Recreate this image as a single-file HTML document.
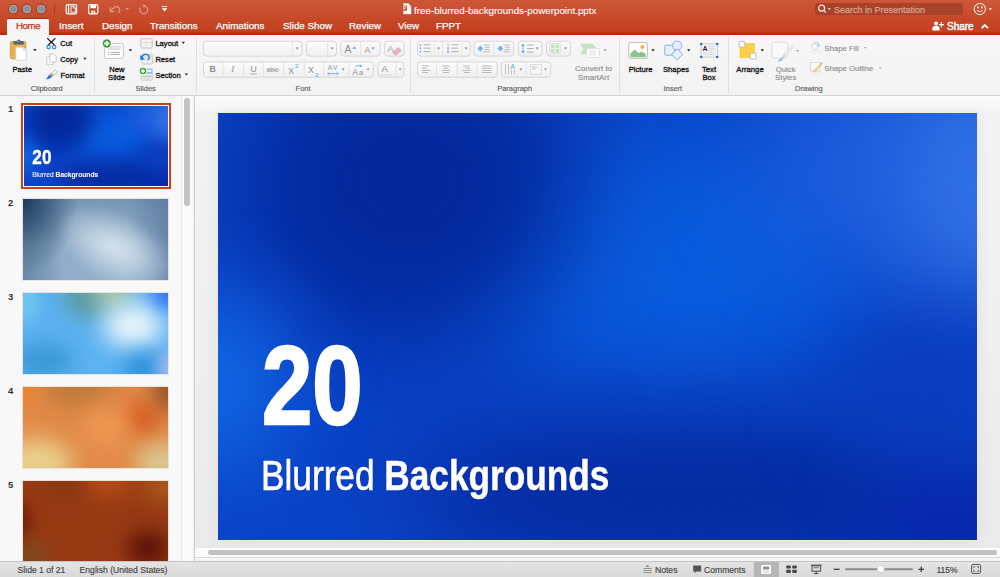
<!DOCTYPE html>
<html><head><meta charset="utf-8">
<style>
*{box-sizing:border-box}
html,body{margin:0;padding:0}
body{width:1000px;height:577px;overflow:hidden;position:relative;font-family:"Liberation Sans",sans-serif;background:#f4f4f4}
.a{position:absolute}
#title{left:0;top:0;width:1000px;height:35px;background:linear-gradient(#cd5739 0px,#c94f30 10px,#c33f1f 32px,#ba2a08 33px,#b82806 35px)}
.tl{position:absolute;top:4px;width:10px;height:10px;border-radius:50%;background:#8d9196;border:1px solid #a2461f}
.tab{position:absolute;top:20px;font-size:9.8px;color:#fff;white-space:nowrap;line-height:12px;-webkit-text-stroke:0.25px currentColor}
#ribbon{left:0;top:35px;width:1000px;height:61px;background:linear-gradient(#f7f7f7,#f4f4f4 60%,#f3f3f3);border-bottom:1px solid #d3d3d3}
.gl{position:absolute;top:84px;font-size:7.6px;color:#555;white-space:nowrap;line-height:9px}
.sep{position:absolute;top:38px;width:1px;height:55px;background:#e0e0e0}
.lbl{position:absolute;font-size:7.8px;color:#222;white-space:nowrap;line-height:9px}
#left{left:0;top:96px;width:194px;height:465px;background:#f8f8f8}
#vs{left:181px;top:96px;width:13px;height:465px;background:#fafafa;border-left:1px solid #e8e8e8;border-right:1px solid #efefef}
#vthumb{left:184px;top:98px;width:6px;height:108px;border-radius:3px;background:#c2c2c2}
#divider{left:194px;top:96px;width:1px;height:465px;background:#d0d0d0}
#main{left:195px;top:96px;width:805px;height:465px;background:linear-gradient(#fcfcfc,#f3f3f3 18px,#efefef 50%,#eaeaea)}
#slide{left:218px;top:113px;width:759px;height:427px;overflow:hidden;background:#0a3cc0;outline:1px solid #f3ead8;box-shadow:0 0 14px rgba(0,0,0,0.07)}
.num{position:absolute;left:8px;font-size:9.5px;font-weight:bold;color:#333;line-height:9px}
.th{position:absolute;left:23px;width:145px;height:81px;overflow:hidden;outline:1px solid #e6e2dc}
#hs{left:195px;top:548px;width:805px;height:13px;background:linear-gradient(#fbfbfb 0,#fbfbfb 9px,#d8d8d8 9px,#d8d8d8 10px,#f6f6f6 10px)}
#hthumb{left:208px;top:550px;width:789px;height:5px;border-radius:3px;background:#c2c2c2}
#status{left:0;top:561px;width:1000px;height:16px;background:linear-gradient(#e4e4e4,#d9d9d9);border-top:1px solid #c4c4c4}
.st{position:absolute;top:3px;font-size:8.6px;color:#4a4a4a;white-space:nowrap;line-height:10px}
.t20{position:absolute;left:44px;top:217px;font-size:111px;font-weight:bold;color:#fff;-webkit-text-stroke:2.4px #fff;text-shadow:0 0 1.5px rgba(0,16,130,0.9);line-height:113px;transform:scaleX(0.815);transform-origin:0 0;white-space:nowrap}
.tbb{position:absolute;left:43px;top:341px;font-size:43px;font-weight:bold;color:#fff;-webkit-text-stroke:0.5px #fff;text-shadow:0 0 1.5px rgba(0,16,130,0.9);line-height:43px;transform:scaleX(0.819);transform-origin:0 0;white-space:nowrap}
.blob{position:absolute;border-radius:50%}
</style></head>
<body>
<!-- TITLE BAR -->
<div id="title" class="a">
  <svg class="a" style="left:0;top:0" width="180" height="18" viewBox="0 0 180 18">
    <g stroke="#a8300f" stroke-width="1"><circle cx="13.2" cy="9" r="4.8" fill="#8e9193"/><circle cx="27" cy="9" r="4.8" fill="#8e9193"/><circle cx="41.1" cy="9" r="4.8" fill="#8e9193"/></g>
    <g fill="none" stroke="#a8bcc8" stroke-width="0.8" opacity="0.8"><circle cx="13.2" cy="9" r="3.8"/><circle cx="27" cy="9" r="3.8"/><circle cx="41.1" cy="9" r="3.8"/></g>
    <line x1="54.6" y1="4" x2="54.6" y2="14" stroke="#a83a1c" stroke-width="1"/>
    <g fill="none" stroke="#fff" stroke-width="1.2">
      <rect x="66.2" y="4.6" width="10.4" height="9.2" rx="1.2"/>
      <line x1="68.6" y1="4.6" x2="68.6" y2="13.8"/>
      <rect x="88.6" y="4.6" width="9.2" height="9.2" rx="1.4"/>
    </g>
    <path d="M71 6.2h3l1.6 1.6v4.4h-4.6z" fill="none" stroke="#fff" stroke-width="0.9"/>
    <path d="M73.6 6.2v2h2" fill="none" stroke="#fff" stroke-width="0.8"/>
    <path d="M90.4 5.2h5.6v3h-5.6z" fill="#fff"/>
    <path d="M91.2 10.8h4v3h-4z" fill="#fff"/>
    <rect x="92.6" y="11.8" width="1.2" height="1.4" fill="#c9502f"/>
    <g fill="none" stroke="#fff" stroke-width="1.2" opacity="0.42">
      <path d="M110.2 7v4.6h4.4"/>
      <path d="M110.6 11.2l3-3a3.3 3.3 0 1 1 4.4 4.6"/>
      <path d="M140.6 7.6a3.9 3.9 0 1 0 4.6 -1.4"/>
    </g>
    <path d="M142.6 4.2l3.4 1.4-2.4 2.6z" fill="#fff" opacity="0.42"/>
    <path d="M125.4 8h3.6l-1.8 2z" fill="#fff" opacity="0.45"/>
    <path d="M162 6h5.2v1h-5.2z M161.8 8.2h5.6l-2.8 3.2z" fill="#fff"/>
  </svg>
  <div class="a" style="left:7px;top:18px;width:42px;height:18px;background:#f5f5f5;border-radius:2px 2px 0 0;border-top:1px solid #b3300e"></div>
  <div class="tab" style="left:16px;color:#c2381a;letter-spacing:-0.5px">Home</div>
  <div class="tab" style="left:59px">Insert</div>
  <div class="tab" style="left:102px">Design</div>
  <div class="tab" style="left:150px">Transitions</div>
  <div class="tab" style="left:216px">Animations</div>
  <div class="tab" style="left:283px">Slide Show</div>
  <div class="tab" style="left:349px">Review</div>
  <div class="tab" style="left:398px">View</div>
  <div class="tab" style="left:436px">FPPT</div>
  <div class="tab" style="left:414px;top:4.5px;-webkit-text-stroke:0.1px #fff">free-blurred-backgrounds-powerpoint.pptx</div>
  <svg class="a" style="left:400px;top:2px" width="14" height="14" viewBox="400 2 14 14">
    <path d="M403.6 3.6h4.6l2.8 2.8v7.6h-7.4z" fill="#fff" stroke="#e6e6e6" stroke-width="0.5"/>
    <path d="M408.2 3.6v2.8h2.8" fill="#dfe6ee"/>
    <rect x="402.4" y="5.6" width="4.6" height="5" fill="#d24726"/>
    <path d="M403.6 9.6v-3h1.4a0.9 0.9 0 0 1 0 1.8h-1.4" fill="none" stroke="#fff" stroke-width="0.8"/>
  </svg>
  <div class="a" style="left:815px;top:3px;width:148px;height:12px;background:#a8432a;border-radius:2px"></div>
  <div class="tab" style="left:834px;top:4px;color:#dea08e;font-size:9px">Search in Presentation</div>
  <div class="tab" style="left:947px;top:20.5px;font-size:10px;-webkit-text-stroke:0.45px #fff">Share</div>
  <svg class="a" style="left:800px;top:0" width="200" height="35" viewBox="800 0 200 35">
    <g fill="none" stroke="#fff" stroke-width="1.2" opacity="0.9">
      <circle cx="821.6" cy="8.2" r="3"/><line x1="823.8" y1="10.4" x2="826" y2="12.6"/>
    </g>
    <path d="M827.6 8.2h3.4l-1.7 1.8z" fill="#fff" opacity="0.9"/>
    <g fill="none" stroke="#fff" stroke-width="1">
      <circle cx="979.8" cy="9" r="5.6"/>
      <path d="M977 10.4q2.8 2.6 5.6 0"/>
    </g>
    <g fill="#fff"><ellipse cx="977.9" cy="7.4" rx="0.8" ry="1.1"/><ellipse cx="981.7" cy="7.4" rx="0.8" ry="1.1"/></g>
    <path d="M988.6 8.2h3.4l-1.7 2z" fill="#fff"/>
    <g fill="#fff">
      <circle cx="936" cy="23.6" r="2"/>
      <path d="M932.4 30.4v-1.6q0-3 3.6-3t3.6 3v1.6z"/>
      <rect x="938.8" y="24" width="5.2" height="1.3"/><rect x="940.75" y="22.05" width="1.3" height="5.2"/>
    </g>
    <path d="M981.6 28.2l3.2-3.2 3.2 3.2" fill="none" stroke="#fff" stroke-width="1.9"/>
  </svg>
</div>
<!-- RIBBON -->
<div id="ribbon" class="a"></div>
<!--RB-->
<svg class="a" style="left:0;top:0" width="1000" height="96" viewBox="0 0 1000 96" font-family="Liberation Sans">
<defs><linearGradient id="bg" x1="0" y1="0" x2="0" y2="1"><stop offset="0" stop-color="#fbfbfb"/><stop offset="1" stop-color="#f0f0f0"/></linearGradient></defs>
<line x1="94.5" y1="37" x2="94.5" y2="93" stroke="#e0e0e0" stroke-width="1"/>
<line x1="196.5" y1="37" x2="196.5" y2="93" stroke="#e0e0e0" stroke-width="1"/>
<line x1="410.5" y1="37" x2="410.5" y2="93" stroke="#e0e0e0" stroke-width="1"/>
<line x1="619.5" y1="37" x2="619.5" y2="93" stroke="#e0e0e0" stroke-width="1"/>
<line x1="728.5" y1="37" x2="728.5" y2="93" stroke="#e0e0e0" stroke-width="1"/>
<text x="30.700000000000003" y="90.9" font-size="7.5" fill="#5f5f5f" stroke="#5f5f5f" stroke-width="0.15" font-weight="normal" text-anchor="start" >Clipboard</text>
<text x="135.4" y="90.9" font-size="7.5" fill="#5f5f5f" stroke="#5f5f5f" stroke-width="0.15" font-weight="normal" text-anchor="start" >Slides</text>
<text x="295.6" y="90.9" font-size="7.5" fill="#5f5f5f" stroke="#5f5f5f" stroke-width="0.15" font-weight="normal" text-anchor="start" >Font</text>
<text x="497.20000000000005" y="90.9" font-size="7.5" fill="#5f5f5f" stroke="#5f5f5f" stroke-width="0.15" font-weight="normal" text-anchor="start" >Paragraph</text>
<text x="663.4" y="90.9" font-size="7.5" fill="#5f5f5f" stroke="#5f5f5f" stroke-width="0.15" font-weight="normal" text-anchor="start" >Insert</text>
<text x="795.1" y="90.9" font-size="7.5" fill="#5f5f5f" stroke="#5f5f5f" stroke-width="0.15" font-weight="normal" text-anchor="start" >Drawing</text>
<rect x="10.4" y="41.6" width="15.4" height="17.2" rx="1.3" fill="#eab04e" stroke="#d19236" stroke-width="0.8"/>
<path d="M13.4 44.6v-2.4q0-1.2 1.2-1.2h1.8q0.6-1.6 2.2-1.6t2.2 1.6h1.8q1.2 0 1.2 1.2v2.4z" fill="#5b6373"/>
<circle cx="17.8" cy="41.2" r="0.8" fill="#c9ccd2"/>
<path d="M15.8 47.2h7.4l3.4 3.4v9.6h-10.8z" fill="#fff" stroke="#cfcfcf" stroke-width="0.8"/>
<path d="M23.2 47.2v2.6q0 0.8 0.8 0.8h2.6" fill="#f0f0f0" stroke="#cfcfcf" stroke-width="0.8"/>
<path d="M33.3 49.1h3.4l-1.7 2.2z" fill="#222"/>
<text x="12.5" y="72.1" font-size="7.6" fill="#111" stroke="#111" stroke-width="0.3" font-weight="normal" text-anchor="start" >Paste</text>
<g stroke="#111" stroke-width="1.3" stroke-linecap="round"><line x1="47.6" y1="38.6" x2="55" y2="45.6"/><line x1="55" y1="38.6" x2="47.6" y2="45.6"/></g>
<g fill="none" stroke="#2a7fe0" stroke-width="1.1"><circle cx="48.6" cy="47" r="1.7"/><circle cx="54.2" cy="47" r="1.7"/></g>
<text x="60.3" y="45.9" font-size="7.6" fill="#111" stroke="#111" stroke-width="0.3" font-weight="normal" text-anchor="start" >Cut</text>
<g fill="#fafafa" stroke="#c4c4c4" stroke-width="0.8"><path d="M46.8 56.6h4.2l2.4 2.4v5.4h-6.6z"/><path d="M49.6 53.8h4.2l2.4 2.4v5.8h-6.6z"/></g>
<text x="60.3" y="61.8" font-size="7.6" fill="#111" stroke="#111" stroke-width="0.3" font-weight="normal" text-anchor="start" >Copy</text>
<path d="M83.2 57.8h3.4l-1.7 2.2z" fill="#333"/>
<path d="M55.2 69.8l2 2-3.4 3.6-2-2z" fill="#fff" stroke="#9a9a9a" stroke-width="0.7"/>
<path d="M51.4 72.8l2.4 2.4-1.6 1.6-2.4-2.4z" fill="#c8a27a"/>
<path d="M49.6 74.2l2.6 2.6q-2.4 2.6-6.4 2.6z" fill="#2f78d2"/>
<text x="60.6" y="77.6" font-size="7.6" fill="#111" stroke="#111" stroke-width="0.3" font-weight="normal" text-anchor="start" >Format</text>
<rect x="104.6" y="43.4" width="18.8" height="15" rx="1.6" fill="#fff" stroke="#c6c6c6" stroke-width="1"/>
<rect x="107.6" y="46.2" width="12.8" height="3.2" rx="1.2" fill="#e6e6e6" stroke="#c8c8d0" stroke-width="0.6"/>
<g fill="#9aa3b5"><rect x="107.8" y="52" width="1.2" height="1"/><rect x="107.8" y="54" width="1.2" height="1"/><rect x="110.6" y="52" width="9.2" height="0.9"/><rect x="110.6" y="54" width="9.2" height="0.9"/></g>
<circle cx="106.8" cy="43.5" r="5.2" fill="#fff"/><circle cx="106.8" cy="43.5" r="4.2" fill="#3aa336"/>
<path d="M105.9 40.9h1.8v1.7h1.7v1.8h-1.7v1.7h-1.8v-1.7h-1.7v-1.8h1.7z" fill="#fff"/>
<path d="M128.7 49.2h3.4l-1.7 2.2z" fill="#222"/>
<text x="109.2" y="71.6" font-size="7.6" fill="#111" stroke="#111" stroke-width="0.3" font-weight="normal" text-anchor="start" >New</text>
<text x="108.1" y="79.7" font-size="7.6" fill="#111" stroke="#111" stroke-width="0.3" font-weight="normal" text-anchor="start" >Slide</text>
<rect x="140.6" y="38.4" width="11.8" height="9.8" rx="1.5" fill="#e2e2e2" stroke="#c8c8c8" stroke-width="0.8"/>
<rect x="142" y="39.8" width="9" height="2" fill="#f4f4f4"/><rect x="142" y="43" width="4" height="3.8" fill="#f4f4f4"/><rect x="147" y="43" width="4" height="3.8" fill="#f4f4f4"/>
<text x="155.4" y="45.9" font-size="7.6" fill="#111" stroke="#111" stroke-width="0.3" font-weight="normal" text-anchor="start" >Layout</text>
<path d="M181.6 41.8h3.4l-1.7 2.2z" fill="#333"/>
<rect x="141.8" y="54.4" width="10.8" height="9.8" rx="1.5" fill="#e4e4e4" stroke="#c8c8c8" stroke-width="0.8"/>
<rect x="143" y="59" width="3.6" height="3.8" fill="#f4f4f4"/><rect x="147.6" y="59" width="3.6" height="3.8" fill="#f4f4f4"/>
<path d="M142.2 57.2a3.5 3.3 0 1 1 5.4 3" fill="none" stroke="#1f78e0" stroke-width="1.4"/>
<path d="M140.2 54.8v5h5z" fill="#1f78e0"/>
<text x="155.4" y="61.8" font-size="7.6" fill="#111" stroke="#111" stroke-width="0.3" font-weight="normal" text-anchor="start" >Reset</text>
<rect x="141.2" y="73.6" width="11.4" height="6.6" rx="1.2" fill="#e4e4e4" stroke="#c8c8c8" stroke-width="0.8"/>
<rect x="142.4" y="76" width="9" height="0.8" fill="#b8b8b8"/>
<path d="M146.4 69.2h5.6v3.4h-5.6" fill="none" stroke="#8ab8ee" stroke-width="1.2"/>
<circle cx="143" cy="71" r="4" fill="#fff"/><circle cx="143" cy="71" r="3.3" fill="#3aa336"/>
<path d="M142.3 69h1.4v1.3h1.3v1.4h-1.3v1.3h-1.4v-1.3h-1.3v-1.4h1.3z" fill="#fff"/>
<text x="155.4" y="77.6" font-size="7.6" fill="#111" stroke="#111" stroke-width="0.3" font-weight="normal" text-anchor="start" >Section</text>
<path d="M184.6 73.6h3.4l-1.7 2.2z" fill="#333"/>
<rect x="203.3" y="41.2" width="98.69999999999999" height="14.899999999999999" rx="3" fill="url(#bg)" stroke="#d6d6d6" stroke-width="1"/>
<line x1="292.7" y1="41.7" x2="292.7" y2="55.6" stroke="#e2e2e2" stroke-width="1"/>
<path d="M295.6 47.6h3.06l-1.53 1.9800000000000002z" fill="#8a8a8a"/>
<rect x="306.5" y="41.2" width="30" height="14.899999999999999" rx="3" fill="url(#bg)" stroke="#d6d6d6" stroke-width="1"/>
<line x1="327.6" y1="41.7" x2="327.6" y2="55.6" stroke="#e2e2e2" stroke-width="1"/>
<path d="M330.6 47.6h3.06l-1.53 1.9800000000000002z" fill="#8a8a8a"/>
<rect x="340.7" y="41.2" width="39.30000000000001" height="14.899999999999999" rx="3" fill="url(#bg)" stroke="#d6d6d6" stroke-width="1"/>
<line x1="360.7" y1="41.7" x2="360.7" y2="55.6" stroke="#e2e2e2" stroke-width="1"/>
<text x="344.5" y="53.4" font-size="10.5" fill="#8e8e8e" stroke="#8e8e8e" stroke-width="0" font-weight="normal" text-anchor="start" >A</text>
<path d="M352.2 48.8l2.2-2.2 2.2 2.2z" fill="#6aa4e6"/>
<text x="364.5" y="53" font-size="8.6" fill="#8e8e8e" stroke="#8e8e8e" stroke-width="0" font-weight="normal" text-anchor="start" >A</text>
<path d="M371 47.4h4.2l-2.1 2.1z" fill="#6aa4e6"/>
<rect x="384.7" y="41.2" width="19.400000000000034" height="14.899999999999999" rx="3" fill="url(#bg)" stroke="#d6d6d6" stroke-width="1"/>
<text x="387.5" y="51.6" font-size="9.5" fill="#9a9a9a" stroke="#9a9a9a" stroke-width="0" font-weight="normal" text-anchor="start" >A</text>
<path d="M392.6 52.6l5.6-5 3 2.8-5.6 5z" fill="#eab4c0" stroke="#d890a0" stroke-width="0.6"/>
<rect x="203.5" y="61.9" width="169.7" height="15.300000000000004" rx="3" fill="url(#bg)" stroke="#d6d6d6" stroke-width="1"/>
<line x1="223.2" y1="62.4" x2="223.2" y2="76.7" stroke="#e2e2e2" stroke-width="1"/>
<line x1="243.3" y1="62.4" x2="243.3" y2="76.7" stroke="#e2e2e2" stroke-width="1"/>
<line x1="263.4" y1="62.4" x2="263.4" y2="76.7" stroke="#e2e2e2" stroke-width="1"/>
<line x1="283.5" y1="62.4" x2="283.5" y2="76.7" stroke="#e2e2e2" stroke-width="1"/>
<line x1="304.2" y1="62.4" x2="304.2" y2="76.7" stroke="#e2e2e2" stroke-width="1"/>
<line x1="323.7" y1="62.4" x2="323.7" y2="76.7" stroke="#e2e2e2" stroke-width="1"/>
<line x1="349" y1="62.4" x2="349" y2="76.7" stroke="#e2e2e2" stroke-width="1"/>
<text x="209.6" y="72.4" font-size="8.8" fill="#8e8e8e" stroke="#8e8e8e" stroke-width="0" font-weight="bold" text-anchor="start" >B</text>
<text x="231.2" y="72.4" font-size="9" fill="#8e8e8e" stroke="#8e8e8e" stroke-width="0" font-weight="normal" text-anchor="start" font-family="Liberation Serif" font-style="italic">I</text>
<text x="250.6" y="72.4" font-size="8.6" fill="#8e8e8e" stroke="#8e8e8e" stroke-width="0" font-weight="normal" text-anchor="start" >U</text>
<rect x="250.4" y="73.6" width="6.4" height="0.8" fill="#9a9a9a"/>
<text x="266.6" y="71.8" font-size="7.2" fill="#9a9a9a" stroke="#9a9a9a" stroke-width="0" font-weight="normal" text-anchor="start" >abc</text>
<rect x="266.6" y="69.6" width="13" height="0.8" fill="#a8a8a8"/>
<text x="288.2" y="74" font-size="8.8" fill="#8e8e8e" stroke="#8e8e8e" stroke-width="0" font-weight="normal" text-anchor="start" >X</text>
<text x="295" y="67.8" font-size="6.2" fill="#5a9ee8" stroke="#5a9ee8" stroke-width="0" font-weight="normal" text-anchor="start" >2</text>
<text x="308" y="72.8" font-size="8.8" fill="#8e8e8e" stroke="#8e8e8e" stroke-width="0" font-weight="normal" text-anchor="start" >X</text>
<text x="315" y="76.6" font-size="6.2" fill="#5a9ee8" stroke="#5a9ee8" stroke-width="0" font-weight="normal" text-anchor="start" >2</text>
<text x="327.4" y="70.4" font-size="7.2" fill="#9a9a9a" stroke="#9a9a9a" stroke-width="0" font-weight="normal" text-anchor="start" letter-spacing="1.2">AV</text>
<g stroke="#6aa4e6" stroke-width="0.8" fill="none"><line x1="327.6" y1="73.6" x2="338.4" y2="73.6"/><path d="M329.4 72.2l-1.6 1.4 1.6 1.4 M336.6 72.2l1.6 1.4-1.6 1.4"/></g>
<path d="M341.6 68.4h3.06l-1.53 1.9800000000000002z" fill="#8a8a8a"/>
<text x="352.2" y="74.6" font-size="8.8" fill="#8e8e8e" stroke="#8e8e8e" stroke-width="0" font-weight="normal" text-anchor="start" >A</text>
<text x="359" y="74.6" font-size="7.6" fill="#8e8e8e" stroke="#8e8e8e" stroke-width="0" font-weight="normal" text-anchor="start" >a</text>
<path d="M355.6 66.6q2.4-2 5.2-0.6" fill="none" stroke="#6aa4e6" stroke-width="0.9"/><path d="M360.6 64.4l1.4 2.4-2.6 0.4z" fill="#6aa4e6"/>
<path d="M366.6 68.4h3.06l-1.53 1.9800000000000002z" fill="#8a8a8a"/>
<rect x="378.0" y="61.9" width="25.69999999999999" height="15.300000000000004" rx="3" fill="url(#bg)" stroke="#d6d6d6" stroke-width="1"/>
<line x1="396.1" y1="62.4" x2="396.1" y2="76.7" stroke="#e2e2e2" stroke-width="1"/>
<text x="381.6" y="72.4" font-size="9.6" fill="#8e8e8e" stroke="#8e8e8e" stroke-width="0" font-weight="normal" text-anchor="start" >A</text>
<rect x="380.6" y="74.2" width="11.8" height="1.4" fill="#ececec" stroke="#dcdcdc" stroke-width="0.5"/>
<path d="M398.6 68.4h3.06l-1.53 1.9800000000000002z" fill="#8a8a8a"/>
<rect x="417.5" y="41.2" width="52.69999999999999" height="14.899999999999999" rx="3" fill="url(#bg)" stroke="#d6d6d6" stroke-width="1"/>
<line x1="442.5" y1="41.7" x2="442.5" y2="55.6" stroke="#e2e2e2" stroke-width="1"/>
<g stroke="#e6e6e6"><line x1="434.7" y1="43.5" x2="434.7" y2="54"/><line x1="462" y1="43.5" x2="462" y2="54"/></g>
<g fill="#6aa4e6"><circle cx="420.4" cy="44.8" r="0.9"/><circle cx="420.4" cy="48.2" r="0.9"/><circle cx="420.4" cy="51.7" r="0.9"/></g>
<g fill="#a8a8a8"><rect x="423.6" y="44.3" width="7" height="0.9"/><rect x="423.6" y="47.7" width="7" height="0.9"/><rect x="423.6" y="51.2" width="7" height="0.9"/></g>
<path d="M437 47.6h3.06l-1.53 1.9800000000000002z" fill="#8a8a8a"/>
<g fill="#6aa4e6"><rect x="447.6" y="43.6" width="0.9" height="2.2"/><rect x="447.2" y="47.2" width="1.6" height="2"/><rect x="447.2" y="50.6" width="1.6" height="2.2"/></g>
<g fill="#a8a8a8"><rect x="451.4" y="44.3" width="7" height="0.9"/><rect x="451.4" y="47.7" width="7" height="0.9"/><rect x="451.4" y="51.2" width="7" height="0.9"/></g>
<path d="M464.6 47.6h3.06l-1.53 1.9800000000000002z" fill="#8a8a8a"/>
<rect x="474.0" y="41.2" width="39.5" height="14.899999999999999" rx="3" fill="url(#bg)" stroke="#d6d6d6" stroke-width="1"/>
<line x1="493.7" y1="41.7" x2="493.7" y2="55.6" stroke="#e2e2e2" stroke-width="1"/>
<path d="M477.4 48.5l3-3 3 3-3 3z M497.4 48.5l3-3 3 3-3 3z" fill="#7ab0ec"/>
<g fill="#a8a8a8"><rect x="483.4" y="44.6" width="6.4" height="0.8"/><rect x="484.8" y="46.8" width="5" height="0.8"/><rect x="484.8" y="49.2" width="5" height="0.8"/><rect x="483.4" y="51.4" width="6.4" height="0.8"/><rect x="503.4" y="44.6" width="6.4" height="0.8"/><rect x="504.8" y="46.8" width="5" height="0.8"/><rect x="504.8" y="49.2" width="5" height="0.8"/><rect x="503.4" y="51.4" width="6.4" height="0.8"/></g>
<rect x="518.3" y="41.2" width="23.700000000000045" height="14.899999999999999" rx="3" fill="url(#bg)" stroke="#d6d6d6" stroke-width="1"/>
<path d="M521 46l2-2.4 2 2.4z M521 51l2 2.4 2-2.4z" fill="#6aa4e6"/><rect x="522.6" y="46" width="0.8" height="5" fill="#6aa4e6"/>
<g fill="#a8a8a8"><rect x="527" y="44.6" width="6.6" height="0.9"/><rect x="527" y="48.1" width="6.6" height="0.9"/><rect x="527" y="51.6" width="6.6" height="0.9"/></g>
<path d="M535.6 47.6h3.06l-1.53 1.9800000000000002z" fill="#8a8a8a"/>
<rect x="546.5" y="41.2" width="24" height="14.899999999999999" rx="3" fill="url(#bg)" stroke="#d6d6d6" stroke-width="1"/>
<rect x="549.6" y="43.4" width="10.6" height="10" fill="#f4f4f4" stroke="#d6d6d6" stroke-width="0.6"/>
<g fill="#c4e0c0"><rect x="551" y="44.6" width="3.4" height="3.6"/><rect x="555.6" y="44.6" width="3.4" height="3.6"/><rect x="551" y="49" width="3.4" height="3.6"/><rect x="555.6" y="49" width="3.4" height="3.6"/></g>
<path d="M564 47.6h3.06l-1.53 1.9800000000000002z" fill="#8a8a8a"/>
<rect x="417.5" y="61.9" width="79.69999999999999" height="15.300000000000004" rx="3" fill="url(#bg)" stroke="#d6d6d6" stroke-width="1"/>
<line x1="436.7" y1="62.4" x2="436.7" y2="76.7" stroke="#e2e2e2" stroke-width="1"/>
<line x1="457.4" y1="62.4" x2="457.4" y2="76.7" stroke="#e2e2e2" stroke-width="1"/>
<line x1="477.2" y1="62.4" x2="477.2" y2="76.7" stroke="#e2e2e2" stroke-width="1"/>
<rect x="422" y="65.6" width="7" height="0.8" fill="#ababab"/>
<rect x="422" y="67.8" width="5" height="0.8" fill="#ababab"/>
<rect x="422" y="70" width="8" height="0.8" fill="#ababab"/>
<rect x="422" y="72.2" width="6" height="0.8" fill="#ababab"/>
<rect x="442.5" y="65.6" width="7" height="0.8" fill="#ababab"/>
<rect x="443.5" y="67.8" width="5" height="0.8" fill="#ababab"/>
<rect x="442" y="70" width="8" height="0.8" fill="#ababab"/>
<rect x="443" y="72.2" width="6" height="0.8" fill="#ababab"/>
<rect x="463" y="65.6" width="7" height="0.8" fill="#ababab"/>
<rect x="465" y="67.8" width="5" height="0.8" fill="#ababab"/>
<rect x="462" y="70" width="8" height="0.8" fill="#ababab"/>
<rect x="464" y="72.2" width="6" height="0.8" fill="#ababab"/>
<rect x="482" y="65.6" width="9.5" height="0.8" fill="#ababab"/>
<rect x="482" y="67.8" width="9.5" height="0.8" fill="#ababab"/>
<rect x="482" y="70" width="9.5" height="0.8" fill="#ababab"/>
<rect x="482" y="72.2" width="9.5" height="0.8" fill="#ababab"/>
<rect x="501.4" y="61.9" width="49.30000000000007" height="15.300000000000004" rx="3" fill="url(#bg)" stroke="#d6d6d6" stroke-width="1"/>
<line x1="526" y1="62.4" x2="526" y2="76.7" stroke="#e2e2e2" stroke-width="1"/>
<g fill="#b0b0b0"><rect x="505" y="64" width="0.8" height="10.4"/><rect x="508" y="64" width="0.8" height="10.4"/><rect x="511" y="70" width="0.8" height="4.4"/><rect x="514" y="70" width="0.8" height="4.4"/></g>
<text x="510.2" y="69.4" font-size="7" fill="#6aa4e6" stroke="#6aa4e6" stroke-width="0" font-weight="normal" text-anchor="start" >A</text>
<path d="M519.4 68.4h3.06l-1.53 1.9800000000000002z" fill="#8a8a8a"/>
<rect x="530.4" y="64.6" width="11" height="10" fill="#f6f6f6" stroke="#cfcfcf" stroke-width="0.7"/>
<g fill="#b4b4b4"><rect x="532" y="66.6" width="5" height="0.8"/><rect x="532" y="68.6" width="3.6" height="0.8"/></g>
<path d="M544 68.4h3.06l-1.53 1.9800000000000002z" fill="#8a8a8a"/>
<path d="M580 43.8h12.3l4.8 4.8-4.8 5.6h-12.3l3.4-5.2z" fill="#c6e2c2"/>
<rect x="586.6" y="48.4" width="12.8" height="9" rx="1" fill="#fff" stroke="#d4d4d4" stroke-width="0.8"/>
<g fill="#c8c8c8"><rect x="589" y="50.6" width="7.6" height="0.6"/><rect x="589" y="52.6" width="7.6" height="0.6"/><rect x="589" y="54.6" width="7.6" height="0.6"/></g>
<path d="M603.6 49.3h3.06l-1.53 1.9800000000000002z" fill="#8a8a8a"/>
<text x="593.6" y="71.3" font-size="8.1" fill="#8a8a8a" stroke="#8a8a8a" stroke-width="0.12" font-weight="normal" text-anchor="middle" >Convert to</text>
<text x="593.6" y="80.2" font-size="7.9" fill="#8a8a8a" stroke="#8a8a8a" stroke-width="0.12" font-weight="normal" text-anchor="middle" >SmartArt</text>
<rect x="628.8" y="42.6" width="18.6" height="15.8" rx="1.4" fill="#fff" stroke="#bdbdbd" stroke-width="1"/>
<path d="M630.4 57.2v-3.8l4.2-4 4.4 3.8 2.6-1.6 4.2 2.4v3.2z" fill="#8cc48c"/>
<circle cx="642.3" cy="47" r="2" fill="#f0b430"/>
<path d="M651.4 49.2h3.4l-1.7 2.2z" fill="#222"/>
<text x="640.6" y="71.7" font-size="7.7" fill="#111" stroke="#111" stroke-width="0.3" font-weight="normal" text-anchor="middle" >Picture</text>
<g fill="#e6f0fb" stroke="#78aaea" stroke-width="0.9"><rect x="664.8" y="45.2" width="9.8" height="10" rx="0.8"/><circle cx="677.2" cy="45.6" r="4.6"/><path d="M677.2 48.8l5.6 5.6-5.6 5.6-5.6-5.6z"/></g>
<path d="M687 49.2h3.4l-1.7 2.2z" fill="#222"/>
<text x="676" y="71.7" font-size="7.7" fill="#111" stroke="#111" stroke-width="0.3" font-weight="normal" text-anchor="middle" >Shapes</text>
<rect x="701.2" y="44" width="16" height="13" fill="#fff" stroke="#c0c0c0" stroke-width="0.9"/>
<text x="702.4" y="50.6" font-size="7" fill="#222" stroke="#222" stroke-width="0" font-weight="bold" text-anchor="start" >A</text>
<g fill="#b8b8b8"><rect x="708" y="45.8" width="7.6" height="0.7"/><rect x="708" y="47.8" width="7.6" height="0.7"/><rect x="708" y="49.8" width="7.6" height="0.7"/><rect x="703" y="52.6" width="12.6" height="0.7"/><rect x="703" y="54.6" width="12.6" height="0.7"/></g>
<g fill="#1a70e0"><circle cx="701.2" cy="44" r="1.3"/><circle cx="717.2" cy="44" r="1.3"/><circle cx="701.2" cy="57" r="1.3"/><circle cx="717.2" cy="57" r="1.3"/></g>
<text x="709" y="71.7" font-size="7.7" fill="#111" stroke="#111" stroke-width="0.3" font-weight="normal" text-anchor="middle" >Text</text>
<text x="709" y="80.1" font-size="7.7" fill="#111" stroke="#111" stroke-width="0.3" font-weight="normal" text-anchor="middle" >Box</text>
<rect x="740" y="43.6" width="14.4" height="14" fill="#fdd04c" stroke="#f2bc30" stroke-width="0.6"/>
<g fill="#fff" stroke="#b0b0b0" stroke-width="0.8"><rect x="739.2" y="41.4" width="5.6" height="5.8" rx="0.8"/><rect x="750.2" y="53.2" width="5.8" height="5.8" rx="0.8"/></g>
<path d="M760.6 49.2h3.4l-1.7 2.2z" fill="#222"/>
<text x="750" y="71.7" font-size="7.7" fill="#111" stroke="#111" stroke-width="0.3" font-weight="normal" text-anchor="middle" >Arrange</text>
<rect x="771.8" y="42.2" width="15.8" height="15.8" rx="2.4" fill="#f9f9f9" stroke="#d8d8d8" stroke-width="0.9"/>
<path d="M792.8 45.4l1 1-8.4 9.2-1.6-1.4z" fill="#fff" stroke="#c0c0c0" stroke-width="0.7"/>
<path d="M783.6 54.2l2 1.8-1.6 2.6-3-0.6z" fill="#ead2aa"/>
<path d="M780.8 58l3 0.8q-2 3.2-6.2 2.6z" fill="#98bde8"/>
<path d="M796 50h3.06l-1.53 1.9800000000000002z" fill="#9a9a9a"/>
<text x="785.7" y="72.2" font-size="7.8" fill="#8a8a8a" stroke="#8a8a8a" stroke-width="0.12" font-weight="normal" text-anchor="middle" >Quick</text>
<text x="785.7" y="80.2" font-size="7.8" fill="#8a8a8a" stroke="#8a8a8a" stroke-width="0.12" font-weight="normal" text-anchor="middle" >Styles</text>
<path d="M811.4 46l4.6-4.4 4 4-4.6 4.4z" fill="#fff" stroke="#c4c4c4" stroke-width="0.8"/>
<path d="M814.6 43.2l3.4 3.6 M817 42l2 4" stroke="#8ab6ea" stroke-width="0.9" fill="none"/>
<rect x="810.4" y="51" width="11.2" height="2.2" rx="0.6" fill="#f6f6f6" stroke="#e2e2e2" stroke-width="0.6"/>
<text x="824.6" y="51" font-size="7.7" fill="#8a8a8a" stroke="#8a8a8a" stroke-width="0.12" font-weight="normal" text-anchor="start" >Shape Fill</text>
<path d="M863.8 47h2.8899999999999997l-1.4449999999999998 1.87z" fill="#a8a8a8"/>
<rect x="810.6" y="62.6" width="9.4" height="8.6" fill="#fafafa" stroke="#d0d0d0" stroke-width="0.7"/>
<path d="M814 70l6.6-6.6 1.4 1.4-6.6 6.6-2 0.6z" fill="#f0d890" stroke="#d4b860" stroke-width="0.5"/>
<circle cx="821.6" cy="63.4" r="0.8" fill="#e088a0"/>
<rect x="810.4" y="73" width="11.2" height="2.2" rx="0.6" fill="#f6f6f6" stroke="#e2e2e2" stroke-width="0.6"/>
<text x="824.6" y="71.4" font-size="7.7" fill="#8a8a8a" stroke="#8a8a8a" stroke-width="0.12" font-weight="normal" text-anchor="start" >Shape Outline</text>
<path d="M878.8 67.4h2.8899999999999997l-1.4449999999999998 1.87z" fill="#a8a8a8"/>
</svg>
<!--/RB-->
<!-- LEFT PANEL -->
<div id="left" class="a"></div>
<div id="vs" class="a"></div>
<div id="vthumb" class="a"></div>
<div id="divider" class="a"></div>
<div class="num" style="top:104px">1</div>
<div class="num" style="top:198px">2</div>
<div class="num" style="top:292px">3</div>
<div class="num" style="top:386px">4</div>
<div class="num" style="top:480px">5</div>
<div class="a" style="left:21px;top:103px;width:150px;height:86px;border:2px solid #d63c14;background:#fff"></div>
<div class="th" style="top:106px;left:24px;width:144px;height:80px;outline:none;background:#0a3cc0"><div class="a" style="left:0;top:0;width:759px;height:427px;transform:scale(0.18972,0.18735);transform-origin:0 0;overflow:hidden">
  <div class="blob" style="left:-60px;top:-60px;width:880px;height:550px;background:#0a44c8;border-radius:0"></div>
  <div class="blob" style="left:240px;top:30px;width:420px;height:240px;background:#0a5cde;filter:blur(50px)"></div>
  <div class="blob" style="left:540px;top:-60px;width:300px;height:220px;background:#1c5cdc;filter:blur(45px)"></div>
  <div class="blob" style="left:690px;top:-50px;width:140px;height:260px;background:#3371e4;filter:blur(45px)"></div>
  <div class="blob" style="left:20px;top:-90px;width:340px;height:320px;background:#03289c;filter:blur(55px)"></div>
  <div class="blob" style="left:180px;top:310px;width:580px;height:150px;background:#05299e;filter:blur(50px)"></div>
  <div class="blob" style="left:-80px;top:180px;width:150px;height:180px;background:#1064e2;filter:blur(40px)"></div>
  <div class="blob" style="left:650px;top:340px;width:180px;height:150px;background:#0828ac;filter:blur(35px)"></div>
  <div class="blob" style="left:620px;top:200px;width:200px;height:140px;background:#0a3cbc;filter:blur(45px)"></div>
  <div class="t20">20</div>
  <div class="tbb"><span style="font-weight:normal;-webkit-text-stroke:0.65px #fff">Blurred</span> Backgrounds</div>
</div></div>
<div class="th" style="top:199px;background:radial-gradient(ellipse 38% 95% at 0% 0%,#1c3a5e 0%,rgba(42,72,106,0.75) 40%,rgba(70,100,135,0) 100%),radial-gradient(ellipse 30% 60% at 0% 100%,rgba(60,92,128,0.5) 0%,rgba(60,92,128,0) 100%),linear-gradient(90deg,rgba(0,0,0,0) 72%,rgba(70,100,140,0.5) 100%),linear-gradient(180deg,#7896b5 0%,#8dabc7 55%,#93afcb 100%)">
  <div class="blob" style="left:28px;top:14px;width:128px;height:70px;background:radial-gradient(ellipse closest-side,#d6e3ee 0%,rgba(204,219,232,0.75) 40%,rgba(170,192,214,0) 100%);transform:rotate(26deg);filter:blur(3px)"></div>
</div>
<div class="th" style="top:293px;background:#55b0ee"><div class="blob" style="left:-20px;top:-20px;width:185px;height:122px;background:#5cb2f2;filter:blur(0px)"></div><div class="blob" style="left:40px;top:-15px;width:50px;height:40px;background:#5c9aa2;filter:blur(10px)"></div><div class="blob" style="left:70px;top:-15px;width:40px;height:30px;background:#a8c8a2;filter:blur(10px)"></div><div class="blob" style="left:80px;top:10px;width:60px;height:45px;background:#eef6fb;filter:blur(12px)"></div><div class="blob" style="left:130px;top:-15px;width:30px;height:30px;background:#3674f2;filter:blur(8px)"></div><div class="blob" style="left:-15px;top:-10px;width:30px;height:40px;background:#70c8f0;filter:blur(8px)"></div><div class="blob" style="left:-10px;top:50px;width:60px;height:35px;background:#3a98d4;filter:blur(10px)"></div><div class="blob" style="left:100px;top:60px;width:40px;height:30px;background:#2a8ed8;filter:blur(10px)"></div><div class="blob" style="left:135px;top:60px;width:25px;height:30px;background:#aab8f2;filter:blur(8px)"></div></div>
<div class="th" style="top:387px;background:#e08840"><div class="blob" style="left:-20px;top:-20px;width:185px;height:122px;background:#e28a48;filter:blur(0px)"></div><div class="blob" style="left:20px;top:-15px;width:70px;height:35px;background:#c07a3c;filter:blur(10px)"></div><div class="blob" style="left:-15px;top:-15px;width:30px;height:30px;background:#ec8430;filter:blur(8px)"></div><div class="blob" style="left:130px;top:-15px;width:30px;height:40px;background:#8c5028;filter:blur(10px)"></div><div class="blob" style="left:100px;top:15px;width:35px;height:35px;background:#d2581e;filter:blur(10px)"></div><div class="blob" style="left:60px;top:20px;width:50px;height:40px;background:#ee9852;filter:blur(12px)"></div><div class="blob" style="left:-25px;top:52px;width:75px;height:48px;background:#e8d08c;filter:blur(11px)"></div><div class="blob" style="left:112px;top:55px;width:55px;height:42px;background:#dac890;filter:blur(11px)"></div></div>
<div class="th" style="top:481px;background:#983a14"><div class="blob" style="left:-20px;top:-20px;width:185px;height:122px;background:#983a14;filter:blur(0px)"></div><div class="blob" style="left:60px;top:-15px;width:50px;height:30px;background:#b44e1a;filter:blur(10px)"></div><div class="blob" style="left:120px;top:-10px;width:40px;height:30px;background:#aa5a20;filter:blur(10px)"></div><div class="blob" style="left:-15px;top:20px;width:22px;height:40px;background:#6c1a08;filter:blur(8px)"></div><div class="blob" style="left:-15px;top:60px;width:40px;height:30px;background:#7c4a20;filter:blur(10px)"></div><div class="blob" style="left:105px;top:50px;width:40px;height:35px;background:#5a1008;filter:blur(10px)"></div><div class="blob" style="left:20px;top:-10px;width:40px;height:30px;background:#8a3a14;filter:blur(8px)"></div></div>
<!-- MAIN -->
<div id="main" class="a"></div>
<div id="slide" class="a">
  <div class="blob" style="left:-60px;top:-60px;width:880px;height:550px;background:#0a44c8;border-radius:0"></div>
  <div class="blob" style="left:240px;top:30px;width:420px;height:240px;background:#0a5cde;filter:blur(50px)"></div>
  <div class="blob" style="left:540px;top:-60px;width:300px;height:220px;background:#1c5cdc;filter:blur(45px)"></div>
  <div class="blob" style="left:690px;top:-50px;width:140px;height:260px;background:#3371e4;filter:blur(45px)"></div>
  <div class="blob" style="left:20px;top:-90px;width:340px;height:320px;background:#03289c;filter:blur(55px)"></div>
  <div class="blob" style="left:180px;top:310px;width:580px;height:150px;background:#05299e;filter:blur(50px)"></div>
  <div class="blob" style="left:-80px;top:180px;width:150px;height:180px;background:#1064e2;filter:blur(40px)"></div>
  <div class="blob" style="left:650px;top:340px;width:180px;height:150px;background:#0828ac;filter:blur(35px)"></div>
  <div class="blob" style="left:620px;top:200px;width:200px;height:140px;background:#0a3cbc;filter:blur(45px)"></div>
  <div class="t20">20</div>
  <div class="tbb"><span style="font-weight:normal;-webkit-text-stroke:0.65px #fff">Blurred</span> Backgrounds</div>
</div>
<div id="hs" class="a"></div>
<div id="hthumb" class="a"></div>
<!-- STATUS -->
<div id="status" class="a"></div>
<svg class="a" style="left:0;top:561px" width="1000" height="16" viewBox="0 561 1000 16" font-family="Liberation Sans">
  <rect x="753.8" y="562" width="25.2" height="15" fill="#b6b6b6"/>
  <g font-size="8.6" fill="#444" stroke="#444" stroke-width="0.15">
    <text x="17.6" y="572.7">Slide 1 of 21</text>
    <text x="79.6" y="572.7">English (United States)</text>
    <text x="655" y="572.7">Notes</text>
    <text x="704" y="572.7">Comments</text>
    <text x="936.4" y="572.7">115%</text>
  </g>
  <g fill="#8a8a8a">
    <path d="M645.2 567h4.4l-2.2-2.2z"/>
    <rect x="643.4" y="568" width="8.2" height="0.9"/><rect x="643.4" y="570" width="8.2" height="0.9"/><rect x="643.4" y="572" width="8.2" height="0.9"/>
  </g>
  <path d="M693.2 565.6h8v6h-4.6l-1.8 1.6v-1.6h-1.6z" fill="#555"/>
  <rect x="761.2" y="565" width="9.8" height="9" rx="1" fill="#fff"/>
  <rect x="763" y="566.6" width="6.2" height="2.8" fill="#8c8c8c"/>
  <rect x="763" y="570.6" width="6.2" height="0.6" fill="#bbb"/><rect x="763" y="572" width="6.2" height="0.6" fill="#bbb"/>
  <g fill="#4a4a4a"><rect x="786.2" y="565.4" width="4.6" height="3.2" rx="0.8"/><rect x="792.2" y="565.4" width="4.6" height="3.2" rx="0.8"/><rect x="786.2" y="569.8" width="4.6" height="3.2" rx="0.8"/><rect x="792.2" y="569.8" width="4.6" height="3.2" rx="0.8"/></g>
  <g fill="none" stroke="#4a4a4a" stroke-width="1"><rect x="812" y="565.8" width="8.6" height="5.4"/><line x1="816.3" y1="571.2" x2="816.3" y2="573.4"/><line x1="814" y1="573.6" x2="818.6" y2="573.6"/></g>
  <rect x="810.8" y="564.6" width="11" height="1" fill="#4a4a4a"/>
  <rect x="813.6" y="567.4" width="5" height="0.8" fill="#4a4a4a"/>
  <rect x="833.6" y="568.6" width="6" height="1.4" fill="#4a4a4a"/>
  <rect x="845" y="568.2" width="68" height="2" rx="1" fill="#8c8c8c"/>
  <circle cx="880.8" cy="569.1" r="3.6" fill="#fff" stroke="#bdbdbd" stroke-width="0.6"/>
  <rect x="918.4" y="568.6" width="5.6" height="1.4" fill="#4a4a4a"/><rect x="920.5" y="566.5" width="1.4" height="5.6" fill="#4a4a4a"/>
  <rect x="971.6" y="564.4" width="9" height="9" rx="1.4" fill="none" stroke="#555" stroke-width="1"/>
  <g fill="#555"><path d="M973.4 566.2h2.2l-2.2 2.2z M978.8 566.2h-2.2l2.2 2.2z M973.4 571.6h2.2l-2.2-2.2z M978.8 571.6h-2.2l2.2-2.2z"/></g>
</svg>
</body></html>
